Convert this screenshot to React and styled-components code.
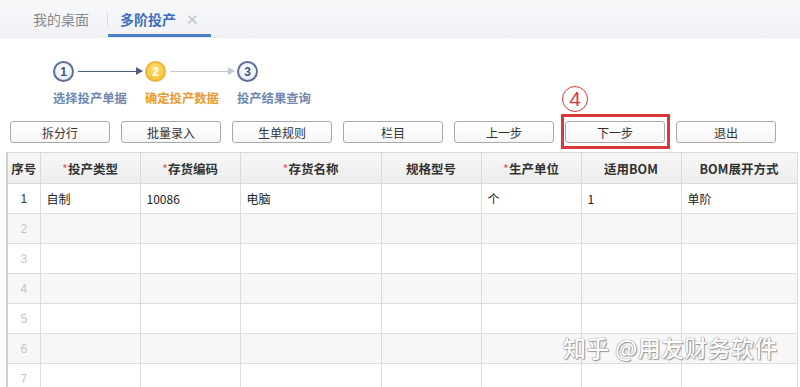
import styled, { createGlobalStyle } from 'styled-components';

const GlobalStyle = createGlobalStyle`
  body {
    margin: 0;
    background: #fff;
    font-family: "Noto Sans CJK SC", "Noto Sans", sans-serif;
  }
`;

const steps = [
  { n: 1, label: '选择投产单据', state: 'done' },
  { n: 2, label: '确定投产数据', state: 'active' },
  { n: 3, label: '投产结果查询', state: 'todo' },
];

const buttons = ['拆分行', '批量录入', '生单规则', '栏目', '上一步', '下一步', '退出'];

const columns = [
  { title: '序号', width: 33 },
  { title: '投产类型', width: 100, required: true },
  { title: '存货编码', width: 100, required: true },
  { title: '存货名称', width: 141, required: true },
  { title: '规格型号', width: 100 },
  { title: '生产单位', width: 100, required: true },
  { title: '适用BOM', width: 100 },
  { title: 'BOM展开方式', width: 116 },
];

const rows = [
  ['1', '自制', '10086', '电脑', '', '个', '1', '单阶'],
  ['2'], ['3'], ['4'], ['5'], ['6'], ['7'],
];

function App() {
  return (
    <Page>
      <GlobalStyle />
      <TabBar>
        <Tab>我的桌面</Tab>
        <TabDivider />
        <Tab active>
          多阶投产
          <Close>✕</Close>
        </Tab>
      </TabBar>

      <Steps>
        {steps.map((s, i) => (
          <Step key={s.n}>
            <StepTop>
              <Circle state={s.state}>{s.n}</Circle>
              {i < steps.length - 1 && <Connector dark={s.state === 'done'} />}
            </StepTop>
            <StepLabel state={s.state}>{s.label}</StepLabel>
          </Step>
        ))}
      </Steps>

      <Toolbar>
        {buttons.map((b) =>
          b === '下一步' ? (
            <Highlight key={b}>
              <Mark>4</Mark>
              <Button>{b}</Button>
            </Highlight>
          ) : (
            <Button key={b}>{b}</Button>
          )
        )}
      </Toolbar>

      <TableWrap>
        <Table>
          <colgroup>
            {columns.map((c) => (
              <col key={c.title} style={{ width: c.width }} />
            ))}
          </colgroup>
          <thead>
            <tr>
              {columns.map((c) => (
                <Th key={c.title}>
                  {c.required && <Star>*</Star>}
                  {c.title}
                </Th>
              ))}
            </tr>
          </thead>
          <tbody>
            {rows.map((r, i) => (
              <Tr key={i} odd={i % 2 === 1}>
                {columns.map((c, j) =>
                  j === 0 ? (
                    <NumCell key={j} filled={r.length > 1}>{r[0]}</NumCell>
                  ) : (
                    <Td key={j}>{r[j] || ''}</Td>
                  )
                )}
              </Tr>
            ))}
          </tbody>
        </Table>
        <Watermark>知乎 @用友财务软件</Watermark>
      </TableWrap>
    </Page>
  );
}

export default App;

const Page = styled.div`
  width: 800px;
  height: 387px;
  overflow: hidden;
  background: #fff;
`;

const TabBar = styled.div`
  height: 38px;
  display: flex;
  align-items: stretch;
  padding-left: 33px;
  background: linear-gradient(#f7f8fa, #f1f2f5);
  border-bottom: 1px solid #e8e9ec;
  box-sizing: border-box;
`;

const Tab = styled.div`
  display: flex;
  align-items: center;
  padding: 0 ${(p) => (p.active ? '12px' : '0')};
  font-size: 14px;
  color: ${(p) => (p.active ? '#3d6fbe' : '#8a8a8a')};
  font-weight: ${(p) => (p.active ? 600 : 400)};
  border-bottom: ${(p) => (p.active ? '3px solid #4a7fcb' : '3px solid transparent')};
  padding-top: 3px;
  box-sizing: border-box;
`;

const TabDivider = styled.div`
  width: 1px;
  height: 14px;
  background: #dcdde0;
  align-self: center;
  margin: 0 0 0 18px;
`;

const Close = styled.span`
  margin-left: 10px;
  font-size: 15px;
  font-weight: 300;
  color: #c2c5ca;
`;

const Steps = styled.div`
  display: flex;
  padding: 23px 0 0 53px;
  height: 70px;
  box-sizing: border-box;
`;

const Step = styled.div`
  width: 92px;
  display: flex;
  flex-direction: column;
`;

const StepTop = styled.div`
  display: flex;
  align-items: center;
  height: 21px;
`;

const Circle = styled.div`
  width: 17px;
  height: 17px;
  flex: none;
  border-radius: 50%;
  display: flex;
  align-items: center;
  justify-content: center;
  font-size: 12px;
  font-weight: 600;
  font-family: "Liberation Sans", sans-serif;
  border: 2px solid ${(p) => (p.state === 'active' ? '#f0b43a' : '#5c6f93')};
  color: ${(p) => (p.state === 'active' ? '#fff' : '#3c5382')};
  background: ${(p) =>
    p.state === 'active'
      ? 'radial-gradient(circle at 50% 35%, #ffe27a, #f6b824)'
      : 'radial-gradient(circle at 50% 35%, #ffffff, #dfe6f3)'};
`;

const Connector = styled.div`
  flex: 1;
  height: 1px;
  margin: 0 3px 0 4px;
  position: relative;
  background: ${(p) => (p.dark ? '#4e5f80' : '#c4c8cf')};
  &::after {
    content: '';
    position: absolute;
    right: -1px;
    top: -4px;
    border-left: 7px solid ${(p) => (p.dark ? '#4e5f80' : '#c4c8cf')};
    border-top: 4.5px solid transparent;
    border-bottom: 4.5px solid transparent;
  }
`;

const StepLabel = styled.div`
  margin-top: 7px;
  font-size: 12.3px;
  font-weight: 600;
  white-space: nowrap;
  color: ${(p) => (p.state === 'active' ? '#e99a33' : '#6f87b0')};
`;

const Toolbar = styled.div`
  display: flex;
  gap: 11px;
  padding: 13px 0 0 10px;
  height: 44px;
  box-sizing: border-box;
  align-items: flex-start;
`;

const Button = styled.button`
  width: 100px;
  height: 22px;
  padding: 0;
  border: 1px solid #a9a9a9;
  border-radius: 3px;
  background: linear-gradient(#ffffff, #f6f6f6);
  font-family: "Noto Sans CJK SC", sans-serif;
  font-size: 12px;
  color: #333;
  box-sizing: border-box;
`;

const Highlight = styled.div`
  position: relative;
  display: flex;
  &::after {
    content: '';
    position: absolute;
    left: -4px;
    right: -5px;
    top: -7px;
    bottom: -6px;
    border: 3px solid #d9383a;
    pointer-events: none;
  }
`;

const Mark = styled.div`
  position: absolute;
  left: -3px;
  top: -35px;
  width: 24px;
  height: 24px;
  border: 1.5px solid #d9383a;
  border-radius: 50%;
  color: #d9383a;
  font-family: "Liberation Sans", sans-serif;
  font-size: 21px;
  line-height: 24px;
  text-align: center;
`;

const TableWrap = styled.div`
  position: relative;
  margin-left: 6px;
  width: 792px;
`;

const Table = styled.table`
  border-collapse: collapse;
  table-layout: fixed;
  width: 791px;
  border-left: 2px solid #d0d0d0;
  border-right: 1px solid #d8d8d8;
  font-size: 12px;
  color: #222;
`;

const Th = styled.th`
  height: 30px;
  padding: 0;
  background: linear-gradient(#f6f6f6, #eeeeee);
  border: 1px solid #dadada;
  font-weight: 600;
  font-size: 12.5px;
  color: #333;
  text-align: center;
  white-space: nowrap;
`;

const Star = styled.span`
  color: #e0575b;
  font-weight: 400;
`;

const Tr = styled.tr`
  background: ${(p) => (p.odd ? '#f7f7f7' : '#fff')};
`;

const Td = styled.td`
  height: 29px;
  padding: 0 0 0 6px;
  border: 1px solid #dcdcdc;
  vertical-align: middle;
  white-space: nowrap;
  overflow: hidden;
`;

const NumCell = styled(Td)`
  padding: 0;
  text-align: center;
  font-family: "Liberation Sans", sans-serif;
  color: ${(p) => (p.filled ? '#333' : '#c6c6c6')};
`;

const Watermark = styled.div`
  position: absolute;
  left: 557px;
  top: 178px;
  font-size: 23px;
  font-weight: 500;
  letter-spacing: 0.3px;
  color: #fff;
  white-space: nowrap;
  text-shadow: 0 0 1px #8a8a8a, 0 0 1px #8a8a8a, 1px 1px 1px #9a9a9a;
  pointer-events: none;
`;
